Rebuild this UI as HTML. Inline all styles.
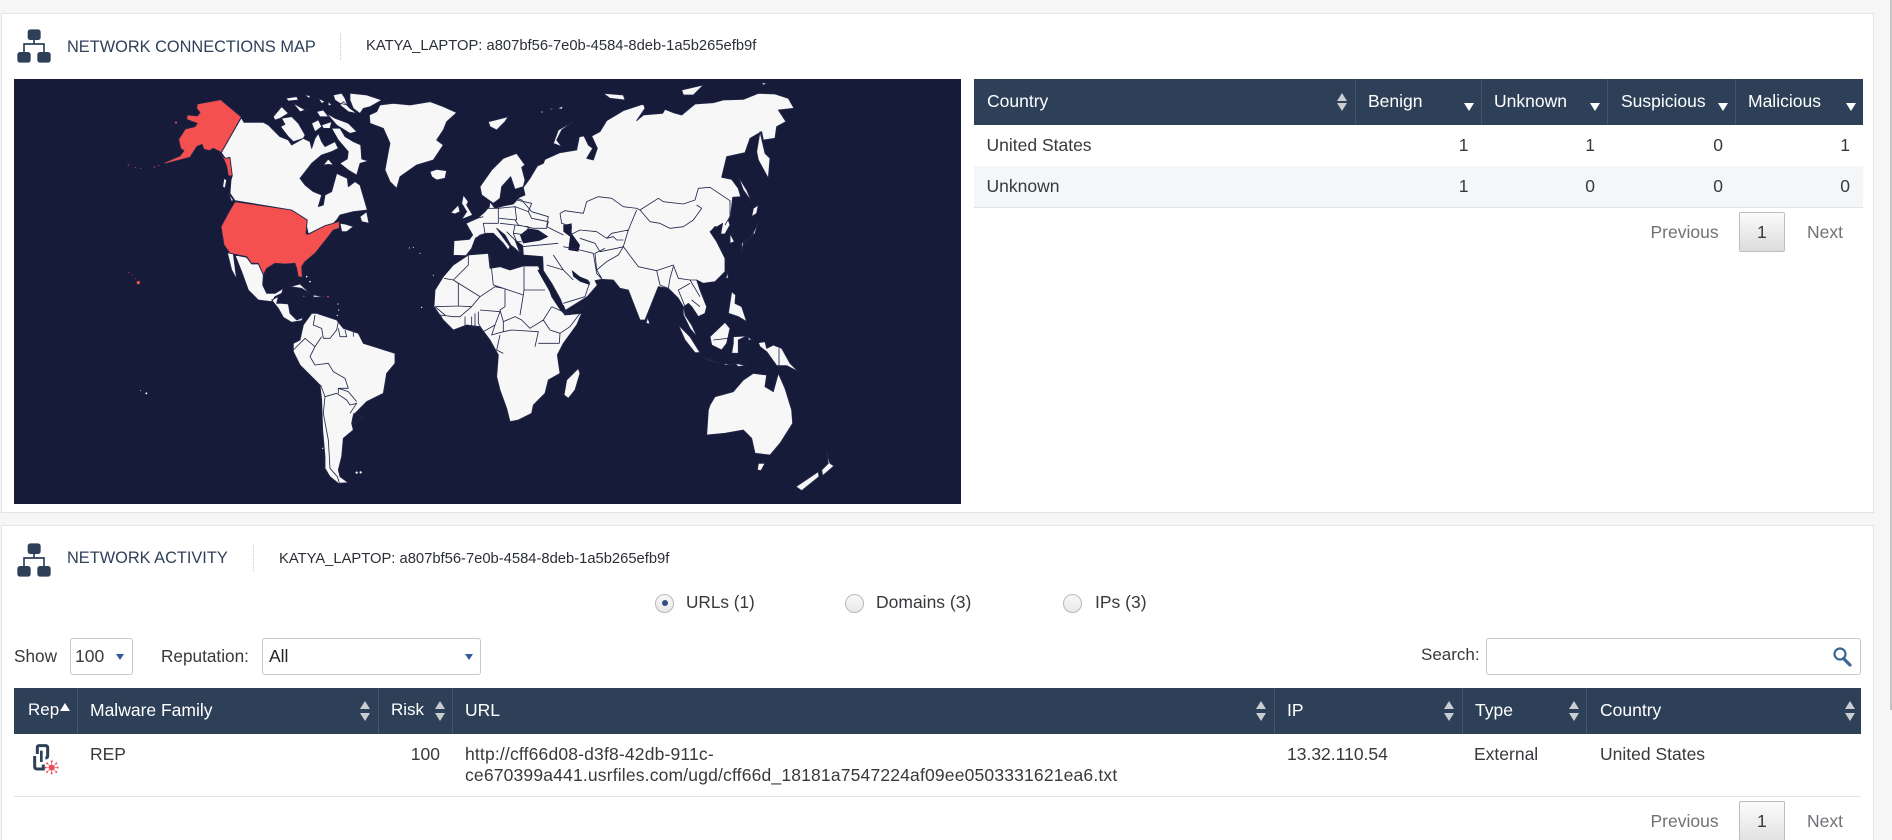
<!DOCTYPE html>
<html lang="en"><head><meta charset="utf-8"><title>Network</title>
<style>
html,body{margin:0;padding:0;background:#f6f6f6}
#root{position:relative;width:1892px;height:840px;overflow:hidden;background:#f6f6f6;font-family:"Liberation Sans",Arial,sans-serif;color:#333}
.p{position:absolute;background:#fff;border:1px solid #e2e3e6;box-sizing:border-box}
.t{position:absolute;white-space:nowrap;font-size:17.5px;line-height:20px;color:#37393d;margin-top:-1px}
.h{color:#fff}
.g{color:#6f7276}
.hd{font-size:16.35px;color:#2e3f58;margin-top:0}
.sub{font-size:14.75px;color:#2b2f36;margin-top:0}
.bar{position:absolute;background:#2e4058}
.sep{position:absolute;width:1px;background:#43546d}
.s{position:absolute;width:0;height:0;border-left:5px solid transparent;border-right:5px solid transparent}
.u{border-bottom:8px solid #c9ccd1}
.d{border-top:8px solid #c9ccd1}
.w{border-top-color:#fff;border-bottom-color:#fff}
.box{position:absolute;box-sizing:border-box;background:#fff;border:1px solid #c8c9cc;border-radius:3px}
.btn{position:absolute;box-sizing:border-box;width:46px;border:1px solid #bdbdbd;background:linear-gradient(#fbfbfb,#dcdcdc);border-radius:2px}
.r{position:absolute;box-sizing:border-box;width:19px;height:19px;border-radius:50%;border:1px solid #b9b9b9;background:linear-gradient(#f8f8f8,#e8e8e8)}
.dot{position:absolute;left:5.5px;top:5.5px;width:6px;height:6px;border-radius:50%;background:#31507f}
.line{position:absolute;height:1px;background:#e1e3e8}
.dash{position:absolute;width:0;border-left:1px dotted #c4c7cc}
.ar{position:absolute;width:0;height:0;border-left:4.5px solid transparent;border-right:4.5px solid transparent;border-top:6px solid #2f5c96}
svg{position:absolute;display:block}
</style></head><body><div id="root">

<div class="p" style="left:1px;top:13px;width:1873px;height:500px"></div>
<div class="p" style="left:1px;top:525px;width:1873px;height:330px"></div>
<div style="position:absolute;left:1890px;top:0;width:2px;height:710px;background:#c4c4c4"></div>

<svg style="left:0;top:0" width="60" height="70" viewBox="0 0 180 210"><g fill="#2e4058"><rect x="83" y="88" width="39" height="32" rx="8"/><rect x="52" y="156" width="40" height="32" rx="8"/><rect x="112" y="156" width="40" height="32" rx="8"/></g><path d="M102 120V132M72 156V132H132V156" fill="none" stroke="#2e4058" stroke-width="5"/></svg>
<div class="t hd" style="left:67px;top:37px">NETWORK CONNECTIONS MAP</div>
<div class="dash" style="left:340px;top:33px;height:27px"></div>
<div class="t sub" style="left:366px;top:36px">KATYA_LAPTOP: a807bf56-7e0b-4584-8deb-1a5b265efb9f</div>

<svg style="left:14px;top:79px" width="947" height="425" viewBox="14 79 947 425">
<rect x="14" y="79" width="947" height="425" fill="#171b3a"/>
<g transform="translate(0,80) scale(.33333)" stroke="#22274a" stroke-width="2.5" stroke-linejoin="round">
<path fill="#f45050" d="M592 72L662 59L724 111L664 217L640 205L628 212L612 208L606 193L590 200L570 232L492 252L493 248L540 228L552 212L542 205L536 178L556 147L585 140L592 130L560 118L562 105L592 108L600 98L590 85ZM657 218L676 235L690 232L697 287L685 288L680 258L670 235ZM705 365L875 390L922 420L918 462L925 463L975 437L1005 428L1018 424L1018 445L1000 450L985 470L965 495L945 520L915 545L905 560L907 592L895 590L890 565L885 550L855 552L825 550L800 565L790 585L775 550L755 550L740 530L690 520L672 495L663 440L690 390Z"/>
<g fill="#f45050" stroke="none"><circle cx="415" cy="608" r="5"/><circle cx="405" cy="596" r="1.5"/><circle cx="395" cy="585" r="1.5"/><circle cx="387" cy="578" r="1.5"/><circle cx="385" cy="255" r="2"/><circle cx="407" cy="263" r="1.5"/><circle cx="422" cy="265" r="1.5"/><circle cx="463" cy="261" r="2"/><circle cx="476" cy="256" r="1.5"/><circle cx="528" cy="128" r="3"/><circle cx="984" cy="650" r="2.5"/></g>
<g fill="#f7f7f7" stroke="#f7f7f7" stroke-width="1"><circle cx="439" cy="940" r="2.5"/><circle cx="422" cy="932" r="1"/><circle cx="1070" cy="1178" r="3"/><circle cx="1082" cy="1177" r="3"/><circle cx="1240" cy="502" r="1.2"/><circle cx="1228" cy="504" r="1.2"/><circle cx="1260" cy="520" r="1.2"/><circle cx="1265" cy="682" r="1.5"/><circle cx="1300" cy="586" r="1.2"/><circle cx="920" cy="590" r="2"/><circle cx="930" cy="605" r="2"/><circle cx="1014" cy="672" r="1.5"/><circle cx="1016" cy="690" r="1.5"/><circle cx="1012" cy="706" r="1.5"/><circle cx="968" cy="1105" r="1.5"/></g>
<path fill="#f7f7f7" d="M724 113L732 127L790 127L805 135L840 170L865 180L875 195L910 175L930 185L935 205L945 175L955 160L965 185L975 200L1005 185L1015 205L995 215L965 225L935 250L900 295L915 315L940 335L965 345L955 380L970 375L975 345L995 335L1010 280L1042 295L1045 320L1065 305L1080 315L1102 390L1060 395L1020 405L1010 420L1000 430L975 437L925 462L920 440L922 420L875 390L705 362L690 340L693 300L697 287L690 232L676 235L664 218Z
M1080 410L1100 395L1107 430L1085 425ZM1020 430L1035 432L1060 440L1040 455L1025 455ZM672 295L680 300L675 325L668 320ZM685 340L700 360L695 365Z
M1108 105L1130 95L1140 75L1180 70L1230 75L1290 65L1330 80L1370 98L1340 125L1330 150L1310 180L1330 195L1300 240L1250 255L1200 290L1190 325L1170 305L1155 270L1165 215L1170 190L1150 145L1110 130Z
M1290 275L1310 268L1340 272L1335 295L1310 300L1295 290ZM1390 345L1405 365L1400 375L1418 405L1385 418L1400 395L1385 370ZM1352 398L1375 375L1380 395L1365 402Z
M682 518L700 522L710 598L695 570ZM705 525L740 532L755 552L775 552L790 585L788 615L800 640L825 640L850 625L845 640L825 650L815 665L775 660L745 630L725 575Z
M815 660L835 650L830 670L845 670L865 672L870 700L890 720L910 712L905 722L875 727L850 712L835 685Z
M870 620L900 612L930 640L905 625ZM940 645L975 650L940 652ZM908 646L918 648L910 651Z
M935 700L910 735L900 780L880 790L880 815L900 855L960 915L965 960L968 1050L975 1130L975 1165L990 1190L1015 1210L1045 1208L1020 1190L1015 1170L1025 1130L1030 1075L1060 1050L1055 1030L1060 1005L1100 965L1150 940L1160 880L1185 850L1185 820L1090 790L1075 760L1030 745L1010 720L950 700Z"/>
<path fill="none" d="M945 705L940 735L965 745L970 775L990 775L1010 750L1015 725M1015 745L1020 770L1040 770L1035 750M1060 745L1060 770M880 810L915 775L945 800L965 770M945 800L930 830L945 855L985 850L1000 875L1035 895L1045 925L1015 925L1015 940M962 915L975 950L1010 940L1040 960L1050 975L1070 970L1050 1000M1015 925L1045 935L1070 965M1060 1000L1090 1010L1065 1030L1055 1025M975 950L970 1000L985 1080L990 1165L1012 1190M1012 1190L1018 1208"/>
</g>
<g transform="translate(260,85) scale(.33333)" fill="#f7f7f7" stroke="#22274a" stroke-width="2" stroke-linejoin="round">
<path d="M215 130L240 130L255 155L280 170L302 180L305 222L325 228L300 235L290 270L265 255L240 235L262 222L265 200L235 165ZM65 100L95 95L115 115L135 150L130 160L100 170L85 155L62 125L75 118ZM40 95L65 65L85 85L60 100L45 105ZM78 40L110 35L115 45L85 48ZM100 55L135 75L150 70L120 80ZM135 30L150 32L148 40ZM175 40L195 50L185 55ZM205 50L215 60L205 62ZM220 30L245 25L255 40L262 60L240 55L225 45ZM270 25L320 30L365 45L330 65L310 70L300 85L280 70L270 45ZM240 60L250 50L270 70L290 85L265 80ZM170 80L190 75L205 95L180 95ZM200 85L225 100L265 115L290 140L270 145L230 120ZM155 115L175 105L185 125L165 140ZM185 120L215 110L210 130L190 130ZM190 240L205 222L220 240L205 238Z"/>
</g>
<g transform="translate(480,80) scale(.33333)" stroke="#22274a" stroke-width="2.5" stroke-linejoin="round">
<path fill="#f7f7f7" d="M-80 526L-78 482L-32 478L-22 465L-42 430L-8 415L12 398L28 380L30 365L45 385L70 378L100 372L118 352L135 345L130 322L150 295L172 258L190 250L195 238L240 218L290 210L298 170L312 168L325 195L338 205L320 235L340 240L352 205L335 168L360 155L380 122L430 92L490 72L495 85L470 122L490 105L548 100L555 88L580 98L605 105L645 72L700 68L730 60L790 58L835 40L885 42L925 55L942 85L895 90L918 125L890 140L885 175L850 180L845 155L810 175L795 218L740 230L725 292L755 298L775 325L782 350L758 352L752 405L745 420L750 435L735 462L722 462L728 430L712 440L690 455L710 485L735 535L735 575L705 605L670 610L650 600L660 630L680 680L675 700L655 710L635 680L625 670L612 680L615 705L635 735L652 772L630 745L610 705L610 680L595 655L565 625L535 620L495 720L480 720L445 630L420 625L400 600L365 598L345 602L352 615L322 650L255 692L240 655L215 610L190 572L188 530L130 525L128 497L105 480L120 520L105 505L92 495L75 465L50 445L75 480L90 500L85 510L70 490L40 460L20 460L0 465L-15 478L-25 505L-42 527Z
M0 320L35 270L70 235L110 220L135 255L125 262L135 300L130 320L105 328L92 290L65 320L60 355L40 370L5 345Z
M-135 630L-110 590L-80 555L-35 525L25 520L30 565L60 560L90 570L130 558L175 558L190 595L205 620L215 650L235 680L255 705L305 700L290 735L250 790L232 825L240 880L205 900L195 940L160 975L155 1000L115 1020L90 1025L80 985L60 930L50 890L55 825L30 780L0 740L-40 735L-80 750L-110 720L-138 680Z
M295 865L300 880L285 930L265 955L252 945L260 900Z
M25 125L85 110L75 125L50 150L30 140ZM180 95L190 93L188 100ZM210 85L222 86L212 90ZM232 85L250 78L245 88ZM280 125L245 150L230 180L245 200L220 190L235 150ZM370 40L430 45L435 60L390 55ZM605 30L670 15L640 45L610 45ZM845 8L860 10L850 16Z
M840 155L855 220L870 235L865 295L835 240L830 215ZM835 425L825 460L790 490L785 515L785 490L815 470ZM820 385L835 375L830 400L815 410ZM775 290L800 330L815 365L790 330ZM750 460L763 485L750 490Z
M742 575L745 595L738 595ZM755 635L767 645L765 670L785 680L800 725L775 710L745 700ZM690 770L735 727L750 745L740 790L725 810L695 795ZM595 735L630 770L660 818L645 818L615 780ZM665 830L720 850L690 842ZM730 850L760 855L735 855ZM765 850L798 856L775 860ZM760 770L800 768L775 780L775 820L755 820L760 790ZM805 770L815 780L805 780ZM835 788L855 785L860 805L880 795L905 805L930 850L955 875L920 857L890 857L860 815L840 800ZM503 712L510 732L498 730Z
M690 975L705 950L760 935L790 900L820 880L860 885L855 920L880 935L895 880L915 925L935 990L938 1030L900 1090L870 1125L825 1120L815 1075L790 1050L735 1060L680 1065L685 990ZM835 1150L855 1150L843 1172L832 1170ZM1040 1118L1050 1150L1062 1158L1028 1187L1025 1170L1045 1150ZM1015 1175L1017 1190L965 1232L948 1220Z"/>
<path fill="#171b3a" stroke="none" d="M120 465L145 445L175 450L205 470L180 482L130 490L125 480ZM250 435L275 430L275 460L300 495L295 515L265 510L270 470L250 455ZM275 570L300 590L325 600L330 615L300 605L280 590ZM690 455L705 438L725 445L722 462L705 475ZM172 570L180 568L255 688L240 690Z"/>
<path fill="none" d="M130 322L110 355L125 360L155 395L205 410L200 440L250 465M240 400L255 392L310 400L320 365L355 350L395 355L430 380L470 385L480 390L535 355L550 365L610 372L645 360L655 325L690 322L750 362L750 410L735 435M240 400L245 430L275 440L270 465L300 450L350 455L380 475L395 460L445 450L470 390M480 390L510 425L540 430L570 445L610 440L640 420L665 385L650 375M445 450L430 500L460 540L475 560L530 572L580 555L595 595L630 600L650 600M380 475L400 470L410 480L430 480M300 475L345 490L360 515L410 505L430 500M250 500L300 510L340 520L350 580L365 597M375 505L345 520L350 570L365 595M350 570L380 545L415 525L430 500M530 572L540 615L565 625M580 560L570 595L565 625M630 610L595 630L615 680M630 600L660 650M635 660L660 680M897 805L897 860M700 780L745 775"/>
</g>
<g transform="translate(400,200) scale(.33333)" fill="none" stroke="#22274a" stroke-width="2.5" stroke-linejoin="round">
<path d="M132 235L160 240L205 195L205 165M160 240L240 290L285 260L310 265L370 285L372 270L435 270M270 165L275 210L280 255L310 265M372 200L372 270M315 265L315 320L300 330L310 365L345 350L365 360L390 385L430 360L455 320M370 285L360 345M430 360L450 390L480 400L510 380L540 340M455 320L510 345M310 365L310 395L335 390L415 395L405 440M415 430L478 430M480 400L478 430M300 405L290 450L310 460M285 375L275 405L310 395M235 335L235 370L250 395L285 375L300 335L240 330M105 320L175 318L175 250L160 240M175 318L215 320L240 290M215 320L180 350L160 350L120 345M105 320L135 345L115 350M195 350L195 385M215 350L215 385M225 340L225 385M440 195L490 210L520 240M490 310L555 290L570 245M490 315L500 340L555 315M460 165L490 210M190 65L250 50M255 25L295 25L295 70L250 70L255 100L225 115M295 25L345 20L350 60L298 55M345 20L385 35L395 55L445 65L440 85L400 85L355 75L345 60M350 0L395 10L385 35M345 75L385 80L380 105L340 100L345 75M300 70L345 75M320 95L350 125M340 100L350 125L365 125M365 140L475 130M355 145L365 155"/>
</g>
</svg>

<div class="bar" style="left:974px;top:79px;width:888.5px;height:46px"></div>
<div class="sep" style="left:1355px;top:79px;height:46px"></div><div class="sep" style="left:1481px;top:79px;height:46px"></div><div class="sep" style="left:1607px;top:79px;height:46px"></div><div class="sep" style="left:1735px;top:79px;height:46px"></div>
<div class="t h" style="left:987px;top:92px">Country</div>
<div class="t h" style="left:1368px;top:92px">Benign</div>
<div class="t h" style="left:1494px;top:92px">Unknown</div>
<div class="t h" style="left:1621px;top:92px">Suspicious</div>
<div class="t h" style="left:1748px;top:92px">Malicious</div>
<div class="s u" style="left:1337px;top:93px"></div><div class="s d" style="left:1337px;top:103px"></div>
<div class="s d w" style="left:1464px;top:103px"></div><div class="s d w" style="left:1590px;top:103px"></div><div class="s d w" style="left:1718px;top:103px"></div><div class="s d w" style="left:1846px;top:103px"></div>
<div style="position:absolute;left:974px;top:166px;width:888.5px;height:41px;background:#f5f6f8"></div>
<div class="line" style="left:974px;top:207px;width:888.5px"></div>
<div class="t" style="left:986.5px;top:136px">United States</div>
<div class="t" style="left:986.5px;top:177px">Unknown</div>
<div class="t" style="right:423.5px;top:136px">1</div><div class="t" style="right:297px;top:136px">1</div><div class="t" style="right:169px;top:136px">0</div><div class="t" style="right:42px;top:136px">1</div>
<div class="t" style="right:423.5px;top:177px">1</div><div class="t" style="right:297px;top:177px">0</div><div class="t" style="right:169px;top:177px">0</div><div class="t" style="right:42px;top:177px">0</div>
<div class="t g" style="left:1650.5px;top:223px">Previous</div>
<div class="btn" style="left:1739px;top:212px;height:40px"></div>
<div class="t" style="left:1757px;top:223px">1</div>
<div class="t g" style="left:1807px;top:223px">Next</div>

<svg style="left:0;top:514px" width="60" height="70" viewBox="0 0 180 210"><g fill="#2e4058"><rect x="83" y="88" width="39" height="32" rx="8"/><rect x="52" y="156" width="40" height="32" rx="8"/><rect x="112" y="156" width="40" height="32" rx="8"/></g><path d="M102 120V132M72 156V132H132V156" fill="none" stroke="#2e4058" stroke-width="5"/></svg>
<div class="t hd" style="left:67px;top:548px">NETWORK ACTIVITY</div>
<div class="dash" style="left:253px;top:545px;height:27px"></div>
<div class="t sub" style="left:279px;top:549px">KATYA_LAPTOP: a807bf56-7e0b-4584-8deb-1a5b265efb9f</div>

<div class="r" style="left:655px;top:593.5px"><div class="dot"></div></div>
<div class="t" style="left:686px;top:593px;font-size:17.2px">URLs (1)</div>
<div class="r" style="left:845px;top:593.5px"></div>
<div class="t" style="left:876px;top:593px">Domains (3)</div>
<div class="r" style="left:1063px;top:593.5px"></div>
<div class="t" style="left:1095px;top:593px">IPs (3)</div>

<div class="t" style="left:14px;top:647px;font-size:17.2px">Show</div>
<div class="box" style="left:70px;top:638px;width:63px;height:37px"></div>
<div class="t" style="left:75px;top:647px">100</div>
<div class="ar" style="left:116px;top:654px"></div>
<div class="t" style="left:161px;top:647px;font-size:17.2px">Reputation:</div>
<div class="box" style="left:262px;top:638px;width:219px;height:37px"></div>
<div class="t" style="left:269px;top:647px;color:#222">All</div>
<div class="ar" style="left:465px;top:654px"></div>
<div class="t" style="left:1421px;top:646px;font-size:17px">Search:</div>
<div class="box" style="left:1486px;top:638px;width:375px;height:37px"></div>
<svg style="left:1830px;top:645px" width="24" height="24" viewBox="0 0 24 24"><circle cx="10" cy="9" r="5.5" fill="none" stroke="#3a6698" stroke-width="2.2"/><path d="M13.5 13.5L20 20" stroke="#3a6698" stroke-width="3.2" stroke-linecap="round"/></svg>

<div class="bar" style="left:14px;top:688px;width:1847px;height:46px"></div>
<div class="sep" style="left:77px;top:688px;height:46px"></div><div class="sep" style="left:378px;top:688px;height:46px"></div><div class="sep" style="left:452px;top:688px;height:46px"></div><div class="sep" style="left:1274px;top:688px;height:46px"></div><div class="sep" style="left:1462px;top:688px;height:46px"></div><div class="sep" style="left:1586px;top:688px;height:46px"></div>
<div class="t h" style="left:28px;top:701px;font-size:17px">Rep</div>
<div class="t h" style="left:90px;top:701px">Malware Family</div>
<div class="t h" style="left:391px;top:701px;font-size:17px">Risk</div>
<div class="t h" style="left:465px;top:701px">URL</div>
<div class="t h" style="left:1287px;top:701px">IP</div>
<div class="t h" style="left:1475px;top:701px">Type</div>
<div class="t h" style="left:1600px;top:701px">Country</div>
<div class="s u" style="left:60px;top:703px;border-bottom-color:#fff"></div>
<div class="s u" style="left:360px;top:701px"></div><div class="s d" style="left:360px;top:713px"></div>
<div class="s u" style="left:435px;top:701px"></div><div class="s d" style="left:435px;top:713px"></div>
<div class="s u" style="left:1256px;top:701px"></div><div class="s d" style="left:1256px;top:713px"></div>
<div class="s u" style="left:1444px;top:701px"></div><div class="s d" style="left:1444px;top:713px"></div>
<div class="s u" style="left:1569px;top:701px"></div><div class="s d" style="left:1569px;top:713px"></div>
<div class="s u" style="left:1845px;top:701px"></div><div class="s d" style="left:1845px;top:713px"></div>

<svg style="left:0;top:730px" width="70" height="60" viewBox="0 0 210 180">
<path d="M112 72V52Q112 47 118 47H136Q143 47 143 54V78Q143 84 136 84M104 78V110Q104 117 112 117H130V104" fill="none" stroke="#2e4058" stroke-width="9"/>
<path d="M124 62V96" stroke="#2e4058" stroke-width="8"/>
<g fill="#ef5058"><circle cx="155" cy="113" r="9"/><circle cx="155" cy="94" r="3.2"/><circle cx="155" cy="130" r="3.2"/><circle cx="137" cy="113" r="3"/><circle cx="173" cy="113" r="3"/><circle cx="141" cy="100" r="3"/><circle cx="169" cy="100" r="3"/><circle cx="141" cy="126" r="3"/><circle cx="169" cy="126" r="3"/></g>
<path d="M155 94V130M137 113H173M141 100L169 126M169 100L141 126" stroke="#ef5058" stroke-width="2"/>
</svg>
<div class="t" style="left:90px;top:745px">REP</div>
<div class="t" style="right:1452px;top:745px">100</div>
<div class="t" style="left:465px;top:745px;letter-spacing:.17px">http://cff66d08-d3f8-42db-911c-</div>
<div class="t" style="left:465px;top:766px;letter-spacing:.17px">ce670399a441.usrfiles.com/ugd/cff66d_18181a7547224af09ee0503331621ea6.txt</div>
<div class="t" style="left:1287px;top:745px">13.32.110.54</div>
<div class="t" style="left:1474px;top:745px">External</div>
<div class="t" style="left:1600px;top:745px">United States</div>
<div class="line" style="left:14px;top:796px;width:1847px"></div>
<div class="t g" style="left:1650.5px;top:812px">Previous</div>
<div class="btn" style="left:1739px;top:801px;height:50px"></div>
<div class="t" style="left:1757px;top:812px">1</div>
<div class="t g" style="left:1807px;top:812px">Next</div>
</div></body></html>
